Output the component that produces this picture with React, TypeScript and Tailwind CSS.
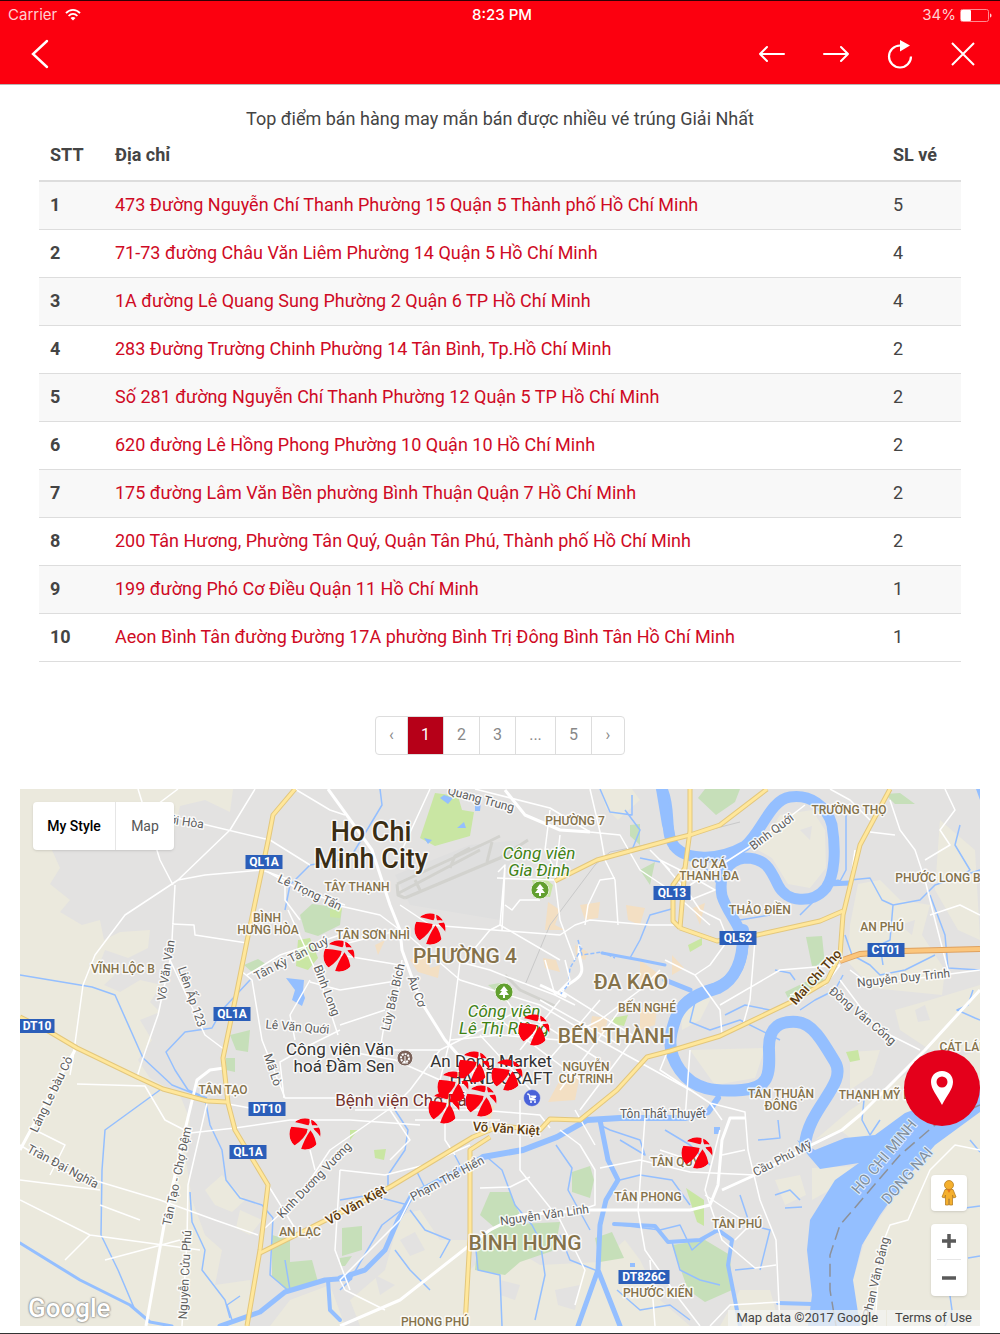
import React from "react";

const ROWS: [string, number][] = [
  ["473 Đường Nguyễn Chí Thanh Phường 15 Quận 5 Thành phố Hồ Chí Minh", 5],
  ["71-73 đường Châu Văn Liêm Phường 14 Quận 5 Hồ Chí Minh", 4],
  ["1A đường Lê Quang Sung Phường 2 Quận 6 TP Hồ Chí Minh", 4],
  ["283 Đường Trường Chinh Phường 14 Tân Bình, Tp.Hồ Chí Minh", 2],
  ["Số 281 đường Nguyễn Chí Thanh Phường 12 Quận 5 TP Hồ Chí Minh", 2],
  ["620 đường Lê Hồng Phong Phường 10 Quận 10 Hồ Chí Minh", 2],
  ["175 đường Lâm Văn Bền phường Bình Thuận Quận 7 Hồ Chí Minh", 2],
  ["200 Tân Hương, Phường Tân Quý, Quận Tân Phú, Thành phố Hồ Chí Minh", 2],
  ["199 đường Phó Cơ Điều Quận 11 Hồ Chí Minh", 1],
  ["Aeon Bình Tân đường Đường 17A phường Bình Trị Đông Bình Tân Hồ Chí Minh", 1],
];

/* ---------- map geometry ---------- */

const RURAL = [
  "M20 789H233L230 812L205 800L180 806L170 850H52L60 868L50 884L70 900L60 912L82 925L100 920L104 940L120 932L150 930L148 948L128 958L105 950L98 968L118 972L104 985L120 992L140 980L162 985L150 1002L160 1012L140 1020L152 1040L138 1060L150 1078L180 1095L190 1120L186 1160L192 1200L205 1235L222 1250L215 1285L250 1280V1326H20Z",
  "M205 1190L222 1175L245 1200L232 1212L215 1205Z M240 1210L262 1220L250 1235L236 1228Z",
  "M400 1215L420 1210L440 1240L470 1240L470 1326L360 1326L350 1300L385 1270Z",
  "M470 1270L500 1240L540 1265L600 1262L625 1240L640 1260L660 1300L690 1326H465Z",
  "M290 1300L330 1285L345 1326H270Z",
  "M780 815L812 810L825 830L826 868L810 888L788 884L772 858L758 850Z",
  "M858 884L880 880L900 900L930 905L922 935L945 970L942 995L872 988L848 962L850 925Z",
  "M940 820L975 850L980 940L958 930L935 890Z",
  "M895 1010L930 1000L980 985V1050L930 1050L900 1030Z",
  "M815 1140L850 1110L905 1075L980 1050V1326H855L850 1290L865 1240L905 1180L840 1130Z",
  "M812 1168L858 1166L830 1190L812 1200Z",
  "M850 1052L880 1050L872 1075L850 1090Z",
  "M680 1000L715 990L700 1020L682 1030Z M690 1050L765 1048L755 1078L715 1085Z",
  "M600 789H632L640 800L618 820L606 808Z",
  "M740 1290L770 1290L780 1326H720Z M775 1180L800 1175L806 1195L785 1205Z",
];

const PARKS = [
  "M300 915L312 904L342 908L340 925L318 936L305 932Z",
  "M244 965L258 959L266 964L252 972Z M230 1035L250 1030L248 1052L236 1050Z",
  "M272 1235L290 1240L290 1262L312 1260L318 1282L288 1292L272 1276Z",
  "M342 1228L362 1226V1250L342 1256Z M340 1258L352 1256L345 1266L340 1266Z",
  "M490 1192L510 1192L520 1215L495 1228L480 1215Z",
  "M478 1240L500 1225L560 1222L555 1250L520 1262L505 1275L475 1270Z",
  "M572 1172L590 1166L594 1180L590 1198L572 1192Z",
  "M595 1238L612 1232L624 1258L600 1262Z",
  "M672 1245L705 1240L730 1255L732 1290L705 1302L688 1290Z",
  "M698 798L705 789H740L735 802L716 815Z M885 794L900 793L915 804L895 804Z M806 937L822 936L825 965L812 966Z",
  "M785 992L820 975L825 982L790 1002Z M640 870L655 862L650 885Z M630 825L640 824L640 845L630 836Z",
  "M226 1058L235 1058V1072L226 1070Z M488 985L500 983L498 993Z",
];

const LIGHT_PARKS = [
  "M435 793L458 796L462 810L474 812L470 836L435 846L420 838Z",
  "M532 880L545 878L553 885L550 897L536 895Z",
  "M298 940L310 938L318 958L308 970L296 966Z M330 909L342 908L340 918L330 917Z",
  "M612 1018L628 1015L624 1026L614 1024Z M846 1052L858 1050L860 1060L850 1062Z",
  "M688 945L702 938L702 945L690 952Z M374 1150L386 1149L384 1160L375 1158Z M350 1130L358 1130L350 1140Z",
  "M686 1188L704 1200L704 1226L697 1222Z",
];

const BUILT = [
  "M548 902L560 910L555 925L565 930L545 930Z M580 905L600 902L598 918L585 920Z M626 905L645 908L640 925L628 920Z",
  "M410 960L425 950L430 968L440 965L438 978L418 972Z M543 958L556 960L560 972L545 968Z M575 945L588 952L585 960L576 956Z",
  "M592 1016L608 1018L604 1036L590 1030Z M640 960L660 975L655 990L640 985Z M560 1080L580 1075L575 1100L548 1102Z M672 955L684 968L672 975Z M693 908L705 903L700 925Z M478 1110L495 1105L490 1120Z M375 945L385 940L378 955Z M640 1010L658 1000L655 1025L640 1030Z",
];

const STREAMS = [
  "M20 975L92 987L115 995L143 1058L172 1085L205 1098L210 1125L222 1150L226 1180L240 1198L262 1205L273 1218L270 1275L290 1292",
  "M250 980L222 1010L212 1028L185 1032L166 1052L175 1070L188 1090L207 1098",
  "M160 1090L105 1130L102 1170L101 1235L118 1270L135 1310",
  "M190 1192L192 1222L205 1250L202 1270L225 1300L230 1318",
  "M380 789L382 805L352 855M340 860L310 865L290 885L285 910",
  "M290 1290L285 1260M232 1320L227 1305L240 1296",
  "M600 789L610 812L632 815L632 795M660 862L640 858M625 810L640 830L632 850M675 908L650 915L640 940L630 958",
  "M395 1110L408 1130L405 1150L388 1175V1187M452 1150L460 1165M417 1172L425 1188",
  "M340 1200L370 1195L408 1205M408 1205L382 1225L350 1280L340 1290M410 1210L425 1230L450 1240L440 1258M395 1250L410 1270L430 1290",
  "M488 1158L502 1170L515 1205L532 1225L540 1240L545 1275L535 1320",
  "M475 1240L478 1270L500 1275L502 1326M560 1235L570 1260L600 1272",
  "M556 1145L572 1168L568 1190L590 1230M600 1125L610 1130L640 1140L645 1155L620 1140",
  "M620 1225L660 1230L680 1225L692 1250L715 1230L732 1240M620 1180L640 1175L672 1180L690 1205",
  "M672 1242L680 1270L700 1280L720 1285M735 1270L755 1268M617 1290L640 1310L670 1305L690 1320",
  "M850 880L870 878L882 900L893 905L890 940L880 945L883 965M893 905L920 900L935 885L980 870M930 895L945 935L948 968L980 970",
  "M845 935L852 955L870 965L880 975L905 970L935 955M960 825L955 845L970 870L955 880",
  "M843 975L835 990L815 1000L800 1010M725 1015L745 1005L770 1010M775 970L790 973L795 980",
  "M700 860L722 890M740 920L770 915M800 915L815 900M846 815V870L838 885",
  "M778 1120L780 1138L758 1140M865 1090L862 1120L870 1135L880 1120M775 1195L790 1190L800 1200M785 1208L802 1207",
  "M973 990L968 1005L957 1010L975 1018L980 1020M965 1208L980 1206M968 1258L980 1256M950 1296L952 1310L945 1326M970 1140L980 1152",
  "M665 1130L690 1145L710 1165M740 1195L750 1225L770 1230L760 1270M695 1002L690 1022L710 1030L740 1020L780 1040",
];

const RIVERS = [
  { w: 11, d: "M662 789C672 810 663 835 676 848S720 860 745 846C762 832 770 800 790 797S827 806 832 825C836 850 835 875 826 888C812 905 786 902 778 885C770 868 765 858 745 858C728 860 718 875 722 896C728 915 742 925 743 945C742 965 735 980 715 988C690 995 680 1005 675 1020" },
  { w: 12, d: "M743 930C744 960 735 980 718 988C692 996 680 1005 675 1020S666 1050 680 1070S715 1092 742 1090S770 1075 769 1050S782 1021 797 1022S822 1040 835 1062S808 1108 805 1145" },
  { w: 6, d: "M483 1157L523 1150L557 1137L587 1120L620 1118L685 1118L708 1112L718 1098" },
  { w: 5, d: "M483 1157L455 1172L412 1195L398 1220L385 1250L365 1270L340 1278M350 1278L325 1280L285 1292L260 1312L220 1326" },
  { w: 5, d: "M600 1120L608 1160L618 1180L606 1200L600 1225L598 1270L578 1326M598 1270L620 1326" },
  { w: 4, d: "M328 1280L330 1310L340 1320" },
  { w: 3, d: "M20 1243L80 1280L130 1305L150 1322L172 1326" },
  { w: 4, d: "M614 1224L655 1226L668 1242L700 1240L718 1230L732 1240L728 1265L735 1300L740 1326M778 1303L812 1304" },
  { w: 3, d: "M602 953L640 960L665 965" },
  { w: 5, d: "M665 980L690 990M838 882L828 884L850 883" },
];

const ROADS_THICK = [
  "M20 1150L28 1135L75 1050",
  "M146 1326L165 1220L185 1130L197 1080L210 1070L224 1068",
  "M340 1326L400 1300L470 1245L490 1230L520 1215L590 1210L690 1210L710 1205L718 1185L722 1140L730 1118L745 1118",
  "M980 990L925 1050L860 1115L842 1130L805 1148L755 1175L722 1190",
  "M328 789L372 850L390 905L400 930L402 950L420 1000L445 1040L480 1080",
  "M505 790L525 815L560 830L590 832",
];

const ROADS = [
  "M138 789L160 860L173 885M178 789L150 810M255 789L230 830L178 880L125 915L95 955L83 985L73 1058L70 1075M178 880L205 875L262 870L290 880",
  "M175 885L172 940L170 960L158 1015L143 1058L137 1077M172 924L194 925L195 935L247 943M170 960L205 1035L225 1050",
  "M165 815L270 840L310 865M295 789L330 810L345 815M268 872L300 890L345 905",
  "M288 910L320 980L338 1035M247 975L280 955L340 935L345 930M240 970L252 980L262 1040L285 1098L360 1098M300 920L285 900V885",
  "M310 980L290 1015L295 1040M310 982L340 990M340 1030L310 1045L280 1062L284 1098",
  "M20 1145L60 1170L160 1200L215 1220L258 1235M77 1084L145 1086L165 1120L190 1133L235 1128L290 1120L350 1120L420 1125",
  "M207 1103L188 1185L187 1240L182 1326M228 1104L250 1108M268 1185L296 1230M315 1170L310 1150",
  "M265 1228L300 1195L330 1150L395 1105L410 1090L440 1050M340 1170L335 1250L350 1290",
  "M340 906L380 915L400 930L340 945M400 905L430 925L560 935L575 925L590 920L650 925L675 925L685 930",
  "M430 789L402 850M402 930L460 980L540 1005L590 1035L690 1090M460 962L450 1040L440 1080M465 960L490 930L500 925L560 960",
  "M505 868L502 930M497 878L555 880M505 905L512 910L520 900L540 900M500 925L505 865L498 872",
  "M475 789L550 808L590 832L620 835L640 870L670 890L710 925M560 835L555 880L560 920L575 960M590 789L600 832L605 860L615 880L618 925",
  "M615 878L600 880L588 905L585 925M660 860L690 895M650 850L670 870M550 810L545 850L555 870",
  "M460 962L490 970L510 978L555 995L570 980L565 960M545 960L555 995L575 1005M500 990L520 1020L545 1030",
  "M340 955L400 965M340 990L402 980M340 1025L385 1010M380 1050L385 1020L398 990L402 960M385 1050L440 1050L480 1030L520 1010",
  "M450 1040L500 1035L560 1040L600 1020L640 990L660 970M520 1050L560 1000M540 1070L600 1000M560 1090L620 1010M580 1110L640 1030",
  "M520 1010L600 1060M540 1000L620 1045M560 990L640 1040M500 1020L580 1080M480 1035L540 1100",
  "M340 1050L395 1060L440 1080M355 1110L480 1110L540 1115L550 1128M390 1110L410 1140L390 1160M445 1100V1140L455 1155M415 1120H500M520 1100L520 1170L560 1220L585 1270L575 1305",
  "M340 1170L385 1175L425 1165L470 1145M345 1290L340 1280L400 1220L415 1190M345 1290L385 1310M480 1188L510 1187L530 1177",
  "M560 1130L580 1145L595 1170V1205L575 1212M575 1110L595 1145M600 1168L640 1160L690 1172L755 1175M645 1118L638 1210L645 1250L680 1300L700 1326",
  "M668 1050L660 1070L710 1103L745 1112L748 1150L760 1200L776 1240L780 1326M745 1150L722 1155M720 1130L705 1190L722 1240L755 1268L776 1265",
  "M710 1103L722 1120M685 1120L690 1050M780 1302L730 1305L710 1326M650 1260L655 1326",
  "M690 895L700 910L720 920L728 940L710 965L695 975L665 960M695 975L720 1010L722 1035M755 940L750 1000L743 1025M720 1005L780 970L840 965",
  "M790 995L825 985L840 965M840 980L870 1020L890 1035L920 1050M843 912L850 885L855 850M850 970L870 985L905 980L980 970",
  "M890 800L900 830L915 850L925 880L935 920L948 970M870 832L895 835M830 789L850 800L870 820M925 860L950 845L940 830L955 810L945 789",
  "M930 915L960 905L980 915M690 885L760 840L805 805M980 1150L955 1145L930 1170L908 1220L890 1225L880 1250L875 1326",
  "M20 1180L100 1190M35 1130L65 1145L50 1175M100 1205L140 1220M65 1260L90 1235M105 1260L180 1240M20 1200L90 1235L200 1250",
  "M660 1150L690 1160M705 1195L750 1225L735 1240M690 900L715 890L680 870L660 860",
];

const YELLOW = [
  "M295 789L273 815L268 841L247 941L237 991L223 1058L228 1103L235 1130L268 1185L260 1250L247 1326",
  "M20 1017L50 1032L77 1048L137 1077L163 1089L207 1101L227 1102",
  "M260 1253L340 1213L390 1187L473 1137L500 1126L540 1130L550 1119L580 1120L617 1090L647 1057L670 1051L720 1036L793 1001L827 981L840 955L843 915L860 845L890 789",
  "M680 928L717 941L757 935L820 921L843 911",
  "M690 789L690 831L685 868L680 928M685 868L673 885L673 921L680 928",
  "M555 881L597 860L670 840L690 835L720 825L767 789",
  "M490 1137L470 1150L470 1237L465 1326",
];

const MARKERS: [number, number][] = [
  [430, 929], [339, 956], [534, 1030], [474, 1067], [507, 1075],
  [453, 1087], [481, 1101], [444, 1108], [305, 1134], [697, 1153],
];

const SHIELDS: [string, number, number, number][] = [
  ["QL1A", 264, 862, 37], ["QL1A", 232, 1014, 37], ["QL1A", 248, 1152, 37],
  ["DT10", 37, 1026, 35], ["DT10", 267, 1109, 37], ["QL13", 672, 893, 37],
  ["QL52", 738, 938, 37], ["CT01", 886, 950, 37], ["DT826C", 644, 1277, 51],
];

type Label = { t: string; x: number; y: number; r?: number };

const PLACES: Label[] = [
  { t: "PHƯỜNG 7", x: 575, y: 825 }, { t: "TÂY THẠNH", x: 357, y: 891 },
  { t: "BÌNH", x: 267, y: 922 }, { t: "HƯNG HÒA", x: 268, y: 934 },
  { t: "TÂN SƠN NHÌ", x: 373, y: 939 }, { t: "VĨNH LỘC B", x: 123, y: 973 },
  { t: "CƯ XÁ", x: 709, y: 868 }, { t: "THẠNH ĐA", x: 709, y: 880 },
  { t: "TRƯỜNG THỌ", x: 849, y: 814 }, { t: "THẢO ĐIỀN", x: 760, y: 914 },
  { t: "AN PHÚ", x: 882, y: 931 }, { t: "PHƯỚC LONG B", x: 938, y: 882 },
  { t: "BẾN NGHÉ", x: 647, y: 1012 }, { t: "NGUYỄN", x: 586, y: 1071 },
  { t: "CƯ TRINH", x: 586, y: 1083 }, { t: "TÂN TẠO", x: 223, y: 1094 },
  { t: "AN LẠC", x: 300, y: 1236 }, { t: "TÂN THUẬN", x: 781, y: 1098 },
  { t: "ĐÔNG", x: 781, y: 1110 }, { t: "THẠNH MỸ LỢI", x: 880, y: 1099 },
  { t: "TÂN QUY", x: 675, y: 1166 }, { t: "TÂN PHONG", x: 648, y: 1201 },
  { t: "TÂN PHÚ", x: 737, y: 1228 }, { t: "PHƯỚC KIỂN", x: 658, y: 1297 },
  { t: "PHONG PHÚ", x: 435, y: 1326 }, { t: "CÁT LÁI", x: 961, y: 1051 },
];

const STREETS: Label[] = [
  { t: "ới Hòa", x: 186, y: 826, r: 8 }, { t: "Quang Trung", x: 480, y: 803, r: 15 },
  { t: "Lê Trọng Tấn", x: 308, y: 896, r: 25 }, { t: "Tân Kỳ Tân Quý", x: 293, y: 962, r: -27 },
  { t: "Bình Long", x: 323, y: 992, r: 69 }, { t: "Võ Văn Vân", x: 170, y: 971, r: -81 },
  { t: "Liên Ấp 123", x: 188, y: 998, r: 71 }, { t: "Lê Văn Quới", x: 297, y: 1031, r: 5 },
  { t: "Lũy Bán Bích", x: 397, y: 998, r: -77 }, { t: "Âu Cơ", x: 413, y: 993, r: 70 },
  { t: "Mã Lò", x: 269, y: 1071, r: 72 }, { t: "Láng Le bàu Cỏ", x: 55, y: 1096, r: -64 },
  { t: "Trần Đại Nghĩa", x: 61, y: 1170, r: 28 }, { t: "Tân Tạo - Chợ Đệm", x: 181, y: 1177, r: -78 },
  { t: "Nguyễn Cửu Phú", x: 189, y: 1275, r: -87 }, { t: "Kinh Dương Vương", x: 317, y: 1183, r: -46 },
  { t: "Phạm Thế Hiển", x: 449, y: 1182, r: -28 }, { t: "Nguyễn Văn Linh", x: 545, y: 1219, r: -8 },
  { t: "Tôn Thất Thuyết", x: 663, y: 1118, r: 0 }, { t: "Cầu Phú Mỹ", x: 784, y: 1162, r: -27 },
  { t: "Bình Quới", x: 774, y: 835, r: -37 }, { t: "Nguyễn Duy Trinh", x: 904, y: 982, r: -6 },
  { t: "Đồng Văn Cống", x: 860, y: 1019, r: 40 }, { t: "Phan Văn Đáng", x: 880, y: 1278, r: -77 },
];

function MapDrawing() {
  return (
    <svg
      className="absolute inset-0 size-full"
      viewBox="20 789 960 537"
      preserveAspectRatio="xMidYMid slice"
      role="img"
      aria-label="Ho Chi Minh City"
      fontFamily="Roboto, 'Noto Sans', sans-serif"
      textAnchor="middle"
    >
      <defs>
        <mask id="gaps" maskUnits="userSpaceOnUse" x="-50" y="-50" width="100" height="100">
          <circle r="46" fill="#fff" />
          <path d="M14-24Q-12-32-34-36L-50-22Q-18-20 12-14Z" />
          <path d="M12-18Q0 14-34 36L-14 52Q-4 18 18-14Z" />
          <path d="M14-14Q34 12 34 40L50 14Q38-4 20-20Z" />
          <path d="M14-20L13-50H18L19-20ZM16-22L50-28V-20L18-16Z" />
          <path d="M16-37L21-26L33-26L25-17L29-5L16-12L5-3L8-16L-3-23L10-25Z" />
        </mask>
        <g id="ball">
          <circle r="46" fill="#fc000f" mask="url(#gaps)" />
        </g>
        <g id="tree">
          <circle r="9" fill="#62a02f" stroke="#e9f0df" />
          <path d="M0-6L4-1H2L5 3H1V6H-1V3H-5L-2-1H-4Z" fill="#fff" />
        </g>
      </defs>
      <rect x="20" y="789" width="960" height="537" fill="#e3e2e1" />
      <path d="M395 875L470 845L520 840L505 875L500 920L470 915L410 905Z" fill="#dfdfdf" />
      <g fill="#ebe9dd">{RURAL.map((d) => <path key={d} d={d} />)}</g>
      <g fill="#e3e2e1">
        <path d="M500 1280L520 1285L515 1300L500 1295Z M555 1290L580 1285L575 1310L558 1305Z M400 1240L415 1232L425 1250L410 1256Z M375 1275L395 1285L380 1295Z" />
        <path d="M915 1010L925 1005L930 1020L918 1022Z M900 925L915 920L912 935Z M800 830L812 826L810 840Z" />
      </g>
      <g fill="#c6dfb9">{PARKS.map((d) => <path key={d} d={d} />)}</g>
      <g fill="#c9e6a3">{LIGHT_PARKS.map((d) => <path key={d} d={d} />)}</g>
      <g fill="#f3dfc3">{BUILT.map((d) => <path key={d} d={d} />)}</g>
      <g fill="none" stroke="#d2d2ce" strokeWidth="3" strokeLinejoin="round">
        <path d="M397 884L490 841L500 836M405 898L500 858L528 840M397 884L398 895L405 898M397 894L480 850M450 868L455 856L470 848M420 890L415 880M487 862L492 842" />
        <path d="M505 975L520 990L555 1006" />
      </g>
      <path d="M525 985L550 925L595 865L610 852L670 840L740 822" fill="none" stroke="#c9c9c9" />
      <g fill="none" stroke="#94bfff" strokeWidth="1.5" strokeLinejoin="round">
        {STREAMS.map((d) => <path key={d} d={d} />)}
      </g>
      <g fill="none" stroke="#94bfff" strokeLinejoin="round" strokeLinecap="round">
        {RIVERS.map((r) => <path key={r.d} d={r.d} strokeWidth={r.w} />)}
      </g>
      <g fill="#94bfff">
        <path d="M976 789H980V800Z M656 789H666L676 840L682 852L670 850L662 825Z" />
        <path d="M797 1140L815 1150L845 1138L875 1135L905 1113L980 1085V1112L935 1145L905 1180L880 1215L862 1245L853 1280L860 1326H808L812 1295L807 1250L810 1220L835 1180L859 1163L820 1169L808 1155Z" />
        <path d="M286 978L304 980L303 992L305 998L302 1006L292 1000L295 990Z M475 802H481L480 811H475Z M440 798L444 795L453 798L448 804Z M457 828L464 822L466 828Z M424 838L432 840L428 844Z M714 1127H720V1134H714Z" />
        <path d="M630 1263H635V1267H630Z" />
      </g>
      <path d="M580 945C575 960 590 970 575 980S560 990 566 997L540 985" fill="none" stroke="#fff" strokeWidth="3" />
      <path d="M578 940L582 955L602 952L615 958M582 948L570 968L568 985L560 995" fill="none" stroke="#94bfff" strokeWidth="1.5" strokeDasharray="4 2" />
      <g fill="none" stroke="#fff" strokeWidth="1.5" strokeLinejoin="round">
        {ROADS.map((d) => <path key={d} d={d} />)}
      </g>
      <g fill="none" stroke="#fff" strokeWidth="3" strokeLinejoin="round">
        {ROADS_THICK.map((d) => <path key={d} d={d} />)}
      </g>
      <g fill="none" stroke="#e3c77c" strokeWidth="5" strokeLinejoin="round">
        {YELLOW.map((d) => <path key={d} d={d} />)}
      </g>
      <g fill="none" stroke="#ffe79b" strokeWidth="3" strokeLinejoin="round">
        {YELLOW.map((d) => <path key={d} d={d} />)}
      </g>
      <path d="M840 961L860 954L903 951L980 949" fill="none" stroke="#dfa15e" strokeWidth="6" />
      <path d="M840 961L860 954L903 951L980 949" fill="none" stroke="#fbc67d" strokeWidth="4" />
      <path d="M980 1105L935 1125L900 1155L870 1190L840 1225L830 1255L830 1290L836 1326" fill="none" stroke="#8d9199" strokeWidth="1.5" strokeDasharray="13 6" />

      {SHIELDS.map(([t, x, y, w]) => (
        <g key={t + y}>
          <rect x={x - w / 2} y={y - 7} width={w} height="14" fill="#2b5eb9" />
          <text x={x} y={y + 4} fontSize="12" fontWeight="700" fill="#fff">{t}</text>
        </g>
      ))}

      <g stroke="#fff" strokeOpacity="0.8" strokeWidth="3" strokeLinejoin="round" className="[paint-order:stroke]">
        <g fontSize="12" fill="#5d5d5d">
          {STREETS.map((l) => (
            <text key={l.t} transform={`translate(${l.x} ${l.y}) rotate(${l.r})`}>{l.t}</text>
          ))}
        </g>
        <g fontSize="12" fontWeight="500" fill="#85724a">
          {PLACES.map((l) => <text key={l.t} x={l.x} y={l.y}>{l.t}</text>)}
        </g>
        <g fontSize="13" fontWeight="500" fill="#5c3a0c">
          <text transform="translate(358 1209) rotate(-29)">Võ Văn Kiệt</text>
          <text transform="translate(506 1133) rotate(4)">Võ Văn Kiệt</text>
          <text transform="translate(819 980) rotate(-48)">Mai Chí Thọ</text>
        </g>
        <g fontSize="21" fontWeight="500" fill="#85724a">
          <text x="465" y="963">PHƯỜNG 4</text>
          <text x="631" y="989">ĐA KAO</text>
          <text x="616" y="1043">BẾN THÀNH</text>
          <text x="525" y="1250">BÌNH HƯNG</text>
        </g>
        <g fontSize="27" fontWeight="500" fill="#3a2d14">
          <text x="371" y="841">Ho Chi</text>
          <text x="371" y="868">Minh City</text>
        </g>
        <g fontSize="17" fontStyle="italic" fill="#3f8214">
          <text x="539" y="859">Công viên</text>
          <text x="539" y="876">Gia Định</text>
          <text x="504" y="1017">Công viên</text>
          <text x="504" y="1034">Lê Thị Riêng</text>
        </g>
        <g fontSize="17" fill="#333">
          <text x="340" y="1055">Công viên Văn</text>
          <text x="344" y="1072">hoá Đầm Sen</text>
          <text x="491" y="1067">An Dong Market</text>
          <text x="501" y="1084">HAND CRAFT</text>
        </g>
        <text x="405" y="1106" fontSize="17" fill="#76322c">Bệnh viện Chợ Rẫy</text>
      </g>
      <g fontSize="15" fill="#82909d" stroke="#dcecff" strokeWidth="2" className="[paint-order:stroke]">
        <text transform="translate(888 1160) rotate(-50)">HO CHI MINH</text>
        <text transform="translate(911 1179) rotate(-49)">DONG NAI</text>
      </g>

      <use href="#tree" x="540" y="890" />
      <use href="#tree" x="504" y="992" />
      <g transform="translate(405 1058)">
        <circle r="8" fill="#7b6259" stroke="#eee" />
        <circle r="4" fill="none" stroke="#fff" strokeWidth="2" strokeDasharray="2 1" />
        <path d="M0-2V5M-3 5H3" stroke="#fff" />
      </g>
      <g transform="translate(532 1098)">
        <circle r="8.500" fill="#4a62d9" stroke="#eee" strokeWidth="0.5" />
        <path d="M-5-4H-3L-2 2H4M-3-2H4L3 0H-2.500" fill="#fff" stroke="#fff" />
        <circle cx="-1" cy="4" r="1" fill="#fff" />
        <circle cx="3" cy="4" r="1" fill="#fff" />
      </g>
      {MARKERS.map(([x, y]) => (
        <use key={`${x}-${y}`} href="#ball" transform={`translate(${x} ${y}) scale(0.34)`} />
      ))}
    </svg>
  );
}

function Header() {
  const btn = "flex h-10 w-10 items-center justify-center";
  return (
    <header className="border-t border-b border-t-[#300004] border-b-[#b9b4b4] bg-[#fc000f] text-white">
      <div className="grid h-6 grid-cols-3 items-center pt-1 pr-2 pl-2 font-['Inter','Roboto',sans-serif] text-[15px] leading-5">
        <div className="flex items-center gap-2 text-[#ffd0d3]">
          <span>Carrier</span>
          <svg width="16" height="12" viewBox="0 0 16 12" fill="none" stroke="#fff" strokeWidth="1.8">
            <path d="M1 4.2C5-.2 11-.2 15 4.2" />
            <path d="M3.6 7C6.2 4.2 9.8 4.2 12.4 7" />
            <path d="M8 11.500L5.500 9C7 7.600 9 7.600 10.500 9Z" fill="#fff" stroke="none" />
          </svg>
        </div>
        <div className="pl-1 text-center font-medium">8:23 PM</div>
        <div className="flex items-center justify-end gap-1 text-[#ffd0d3]">
          <span>34%</span>
          <svg width="32" height="13" viewBox="0 0 32 13">
            <rect x="0.5" y="0.5" width="28" height="12" rx="2" fill="none" stroke="#ff8a90" />
            <rect x="1" y="1" width="10" height="11" rx="1" fill="#fff" />
            <path d="M30 4.5C32 5 32 8 30 8.500Z" fill="#ffd0d3" />
          </svg>
        </div>
      </div>
      <nav className="flex h-[59px] items-center justify-between pr-[17px] pb-0.5 pl-5">
        <button className={btn} aria-label="Back">
          <svg width="20" height="30" viewBox="0 0 20 30" fill="none" stroke="#fff" strokeWidth="2.4" strokeLinecap="round">
            <path d="M17 2L3 15L17 28" />
          </svg>
        </button>
        <div className="flex gap-6">
          <button className={btn} aria-label="Previous page">
            <svg width="28" height="18" viewBox="0 0 28 18" fill="none" stroke="#fff" strokeWidth="2" strokeLinecap="round" strokeLinejoin="round">
              <path d="M27 9H3M10 2L3 9L10 16" />
            </svg>
          </button>
          <button className={btn} aria-label="Next page">
            <svg width="28" height="18" viewBox="0 0 28 18" fill="none" stroke="#fff" strokeWidth="2" strokeLinecap="round" strokeLinejoin="round">
              <path d="M3 9H27M20 2L27 9L20 16" />
            </svg>
          </button>
          <button className={btn} aria-label="Reload">
            <svg width="28" height="30" viewBox="0 0 28 30" fill="none" stroke="#fff" strokeWidth="2.2">
              <path d="M15 6.500A11 11 0 1 0 26 17.500" />
              <path d="M15 1L25 6.500L15 12.500Z" fill="#fff" stroke="none" />
            </svg>
          </button>
          <button className={btn} aria-label="Close">
            <svg width="24" height="24" viewBox="0 0 24 24" fill="none" stroke="#fff" strokeWidth="2">
              <path d="M1 1L23 23M23 1L1 23" />
            </svg>
          </button>
        </div>
      </nav>
    </header>
  );
}

const PAGES = [
  { t: "‹", w: "w-8" }, { t: "1", w: "w-9" }, { t: "2", w: "w-9" }, { t: "3", w: "w-9" },
  { t: "...", w: "w-10" }, { t: "5", w: "w-9" }, { t: "›", w: "w-8" },
];

export default function App() {
  return (
    <div className="border-b border-[#333] bg-white font-['Roboto','Noto_Sans',sans-serif] text-[#444]">
      <Header />
      <main>
        <section className="px-[39px] pt-5">
          <h1 className="text-center text-lg leading-7">Top điểm bán hàng may mắn bán được nhiều vé trúng Giải Nhất</h1>
          <table className="w-full text-left text-lg leading-7">
            <thead>
              <tr className="h-12 border-b-2 border-[#ddd]">
                <th className="w-[65px] px-[11px] pb-1 font-bold">STT</th>
                <th className="px-[11px] pb-1 font-bold">Địa chỉ</th>
                <th className="w-[79px] px-[11px] pb-1 font-bold whitespace-nowrap">SL vé</th>
              </tr>
            </thead>
            <tbody>
              {ROWS.map(([address, count], i) => (
                <tr key={address} className="h-12 border-b border-[#ddd] odd:bg-[#f8f8f8]">
                  <th scope="row" className="px-[11px] font-bold">{i + 1}</th>
                  <td className="px-[11px]"><a href="#map" className="text-[#cf0a24]">{address}</a></td>
                  <td className="px-[11px]">{count}</td>
                </tr>
              ))}
            </tbody>
          </table>
        </section>

        <nav aria-label="Pagination" className="mt-[54px] flex justify-center">
          <div className="flex h-[39px] divide-x divide-[#ddd] overflow-hidden rounded border border-[#ddd] text-base text-[#888]">
            {PAGES.map((p) => (
              <button
                key={p.t}
                aria-current={p.t === "1" ? "page" : undefined}
                className={`${p.w} ${p.t === "1" ? "bg-[#b60018] text-white" : ""}`}
              >
                {p.t}
              </button>
            ))}
          </div>
        </nav>

        <section id="map" className="relative mx-5 mt-[34px] mb-[7px] h-[537px] overflow-hidden">
          <MapDrawing />
          <div className="absolute top-[13px] left-[13px] flex h-12 divide-x divide-[#e6e6e6] rounded-sm bg-white text-sm shadow">
            <button className="w-[83px] font-medium text-black">My Style</button>
            <button className="w-[58px] text-[#565656]">Map</button>
          </div>
          <div className="absolute bottom-1 left-2 text-[26px] leading-7 font-medium text-white [text-shadow:0_0_2px_#777,0_0_2px_#777]">Google</div>

          <button aria-label="My location" className="absolute top-[261px] right-0 flex size-[76px] items-center justify-center rounded-full bg-[#e4001b]">
            <svg width="24" height="34" viewBox="0 0 24 34">
              <path fillRule="evenodd" fill="#fff" d="M12 0C5 0 1 5 1 11C1 18 7 24 12 34C17 24 23 18 23 11C23 5 19 0 12 0ZM12 5.500A5.500 5.500 0 1 1 12 16.500A5.500 5.500 0 1 1 12 5.500Z" />
            </svg>
          </button>

          <div className="absolute right-[13px] bottom-[30px] flex w-9 flex-col gap-[13px]">
            <button aria-label="Street View" className="flex h-9 items-center justify-center rounded-sm bg-white shadow">
              <svg width="16" height="26" viewBox="0 0 16 26" fill="#f5b02e" stroke="#b67d23" strokeWidth="0.8">
                <path d="M4 9.500H12L15 17L12.500 18L11.500 15V25H8.500V19H7.500V25H4.500V15L3.500 18L1 17Z" />
                <circle cx="8" cy="5" r="4.500" />
                <path d="M6 9.500L8 13L10 9.500Z" fill="#e4761b" stroke="none" />
              </svg>
            </button>
            <div className="flex h-[72px] flex-col items-center rounded-sm bg-white shadow">
              <button aria-label="Zoom in" className="flex w-9 flex-1 items-center justify-center">
                <svg width="14" height="14" viewBox="0 0 14 14" stroke="#5a5a5a" strokeWidth="3.500"><path d="M0 7H14M7 0V14" /></svg>
              </button>
              <div className="h-px w-6 bg-[#e6e6e6]" />
              <button aria-label="Zoom out" className="flex w-9 flex-1 items-center justify-center">
                <svg width="14" height="14" viewBox="0 0 14 14" stroke="#5a5a5a" strokeWidth="3.500"><path d="M0 7H14" /></svg>
              </button>
            </div>
          </div>

          <div className="absolute right-0 bottom-0 flex gap-px text-[13px] leading-4 text-[#444]">
            <span className="bg-[#f3f3f0]/75 px-2">Map data ©2017 Google</span>
            <a href="#terms" className="bg-[#f3f3f0]/75 px-2">Terms of Use</a>
          </div>
        </section>
      </main>
    </div>
  );
}
